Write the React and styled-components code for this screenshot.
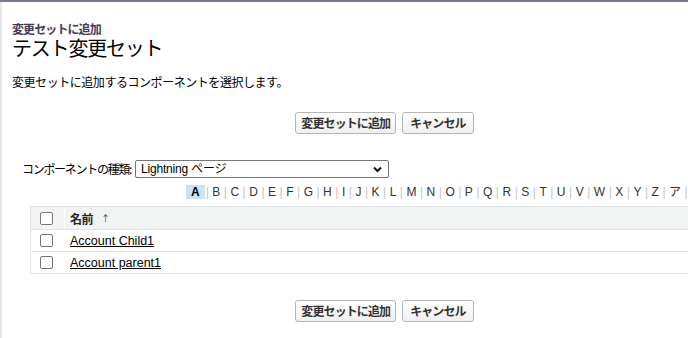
import React from 'react';
import styled, { createGlobalStyle } from 'styled-components';

const GlobalStyle = createGlobalStyle`
  html, body {
    margin: 0;
    padding: 0;
    background: #ffffff;
    overflow: hidden;
  }
  body {
    font-family: "Noto Sans CJK JP", "Liberation Sans", sans-serif;
    color: #000;
  }
`;

const TopBar = styled.div`
  height: 2px;
  background: #757c91;
`;

const Page = styled.div`
  width: 745px;
  min-height: 316px;
  border-left: 2px solid #e6e6e6;
  padding: 20px 10px 0 10px;
  box-sizing: content-box;
`;

const PageType = styled.div`
  font-size: 12px;
  line-height: 13px;
  font-weight: bold;
  color: #463a58;
  letter-spacing: -0.9px;
`;

const PageTitle = styled.h1`
  margin: 1px 0 0 0;
  font-size: 20px;
  line-height: 23px;
  font-weight: normal;
  letter-spacing: -1.2px;
`;

const Description = styled.p`
  margin: 15px 0 0 0;
  font-size: 12px;
  line-height: 16px;
  letter-spacing: -0.45px;
`;

const ButtonRow = styled.div`
  display: flex;
  justify-content: center;
  gap: 6px;
  margin-top: ${({ top }) => top}px;
`;

const Button = styled.button`
  height: 22px;
  padding: 0 ${({ wide }) => (wide ? 7 : 5)}px;
  border: 1px solid #b5b5b5;
  border-radius: 3px;
  background: linear-gradient(#ffffff, #f0f0f0);
  font-family: "Noto Sans CJK JP", sans-serif;
  font-size: 12px;
  font-weight: bold;
  letter-spacing: -0.9px;
  color: #333;
  line-height: 18px;
  cursor: pointer;
`;

const FilterRow = styled.div`
  display: flex;
  align-items: center;
  gap: 4px;
  margin-top: 26px;
  padding-left: 10px;
`;

const Label = styled.label`
  font-size: 12px;
  line-height: 16px;
  letter-spacing: -1.3px;
`;

const SelectBox = styled.div`
  width: 243px;
  height: 16px;
  display: flex;
  align-items: center;
  border: 1px solid #767676;
  border-radius: 2px;
  padding: 0 4px 0 5px;
  box-sizing: content-box;
`;

const SelectText = styled.span`
  flex: 1;
  font-family: "Liberation Sans", "Noto Sans CJK JP", sans-serif;
  font-size: 12px;
  line-height: 16px;
  letter-spacing: -0.2px;
`;

const Chevron = styled.svg`
  width: 9px;
  height: 7px;
  margin-right: 2px;
`;

const Alphabet = styled.div`
  display: flex;
  align-items: center;
  margin-top: 7px;
  padding-left: 174px;
  height: 14px;
  white-space: nowrap;
`;

const Letter = styled.span`
  font-family: "Liberation Sans", "Noto Sans CJK JP", sans-serif;
  font-size: 12px;
  line-height: 14px;
  padding: 0 ${({ active }) => (active ? 5 : 2.5)}px;
  color: ${({ active }) => (active ? '#000' : '#333')};
  font-weight: ${({ active }) => (active ? 'bold' : 'normal')};
  background: ${({ active }) => (active ? '#c9e4f6' : 'transparent')};
`;

const Sep = styled.span`
  font-family: "Liberation Sans", sans-serif;
  font-size: 12px;
  line-height: 14px;
  color: #c4c4c4;
  padding: 0 1px;
`;

const Table = styled.div`
  margin: 7px 0 0 18px;
  border-left: 1px solid #e3e3e3;
  border-top: 1px solid #e0e3e5;
`;

const Row = styled.div`
  display: grid;
  grid-template-columns: 34px 1fr;
  height: ${({ head }) => (head ? 22 : 21)}px;
  align-items: center;
  background: ${({ head }) => (head ? '#f2f3f3' : '#ffffff')};
  border-bottom: 1px solid #e3e3e3;
`;

const CheckCell = styled.div`
  display: flex;
  align-items: center;
  padding-left: 9px;
  height: 100%;
  border-right: ${({ head }) => (head ? '1px solid #ffffff' : 'none')};
`;

const Check = styled.input.attrs({ type: 'checkbox' })`
  appearance: none;
  margin: 0;
  width: 13px;
  height: 13px;
  border: 1px solid #767676;
  border-radius: 2px;
  background: #fff;
`;

const NameCell = styled.div`
  padding-left: 5px;
  display: flex;
  align-items: center;
  gap: 8px;
`;

const HeadText = styled.span`
  font-size: 12px;
  font-weight: bold;
  letter-spacing: -0.5px;
  color: #222;
`;

const SortArrow = styled.span`
  font-size: 9px;
  color: #444;
`;

const NameLink = styled.a`
  font-family: "Liberation Sans", sans-serif;
  font-size: 12.5px;
  color: #000;
  text-decoration: underline;
`;

const letters = ['A','B','C','D','E','F','G','H','I','J','K','L','M','N','O','P','Q','R','S','T','U','V','W','X','Y','Z','ア','カ','サ','タ','ナ','ハ','マ','ヤ','ラ','ワ','その他','すべて'];

const rows = ['Account Child1', 'Account parent1'];

const Actions = ({ top }) => (
  <ButtonRow top={top}>
    <Button>変更セットに追加</Button>
    <Button wide>キャンセル</Button>
  </ButtonRow>
);

export default function App() {
  return (
    <>
      <GlobalStyle />
      <TopBar />
      <Page>
        <PageType>変更セットに追加</PageType>
        <PageTitle>テスト変更セット</PageTitle>
        <Description>変更セットに追加するコンポーネントを選択します。</Description>
        <Actions top={22} />
        <FilterRow>
          <Label>コンポーネントの種類:</Label>
          <SelectBox>
            <SelectText>Lightning ページ</SelectText>
            <Chevron viewBox="0 0 9 7">
              <path d="M1 1.5 L4.5 5 L8 1.5" fill="none" stroke="#111" strokeWidth="2" />
            </Chevron>
          </SelectBox>
        </FilterRow>
        <Alphabet>
          {letters.map((l, i) => (
            <React.Fragment key={l}>
              <Letter active={i === 0}>{l}</Letter>
              <Sep>|</Sep>
            </React.Fragment>
          ))}
        </Alphabet>
        <Table>
          <Row head>
            <CheckCell head><Check /></CheckCell>
            <NameCell>
              <HeadText>名前</HeadText>
              <SortArrow>↑</SortArrow>
            </NameCell>
          </Row>
          {rows.map((r) => (
            <Row key={r}>
              <CheckCell><Check /></CheckCell>
              <NameCell><NameLink href="#">{r}</NameLink></NameCell>
            </Row>
          ))}
        </Table>
        <Actions top={26} />
      </Page>
    </>
  );
}
